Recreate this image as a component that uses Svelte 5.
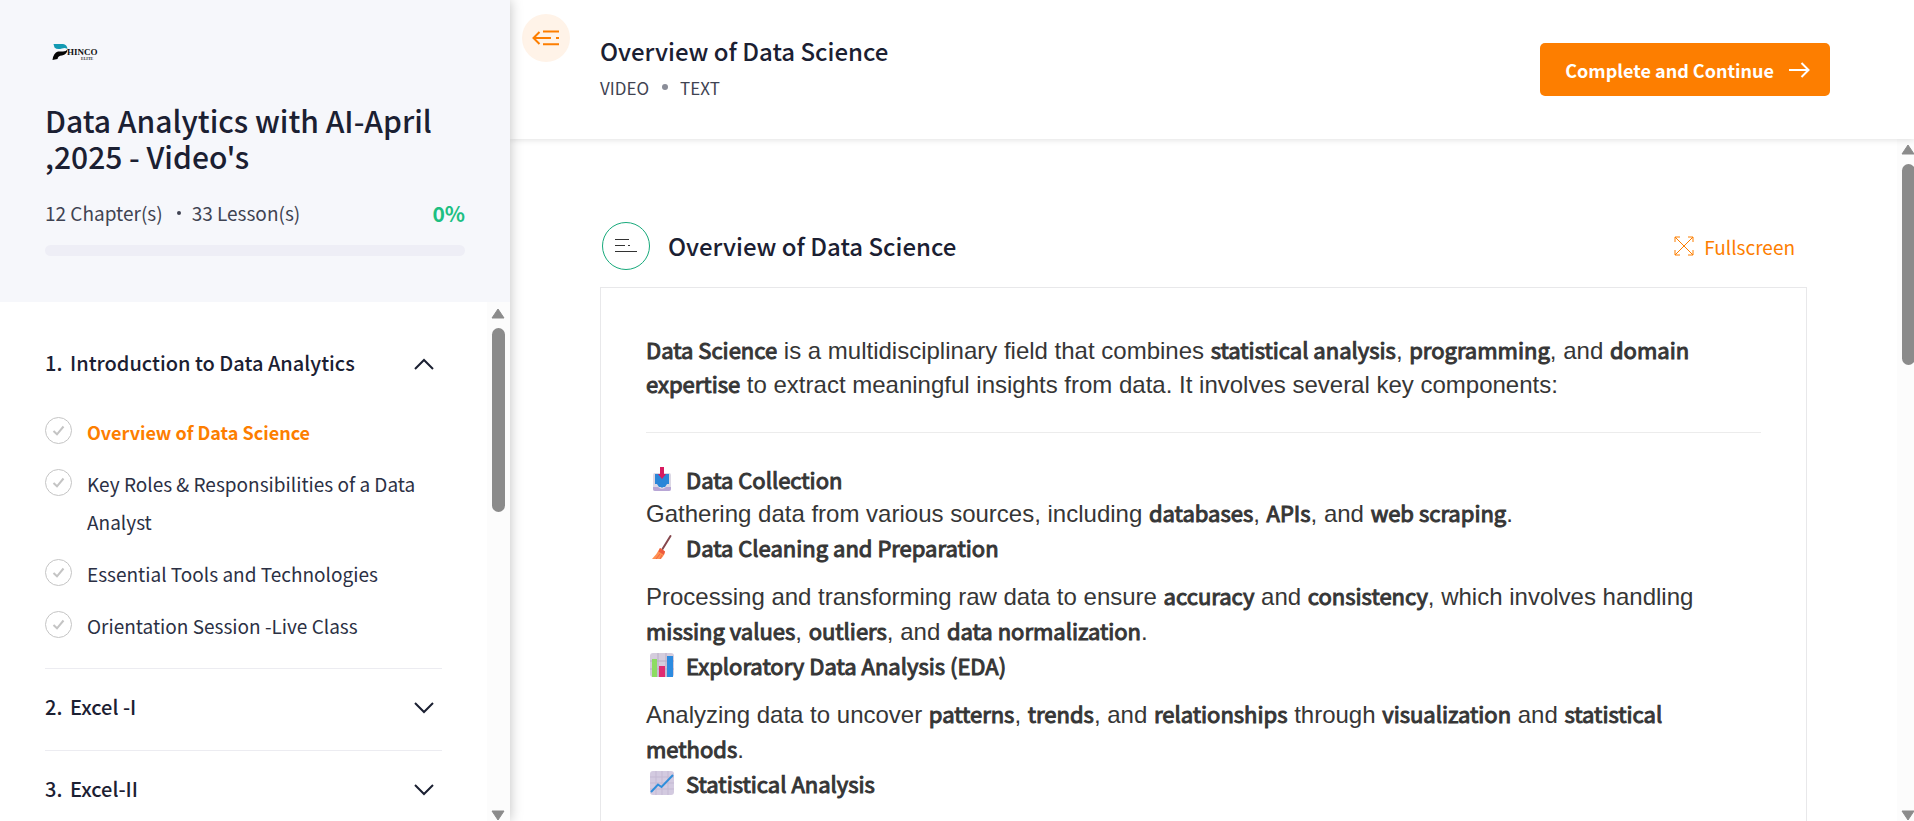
<script lang="ts">
	type Lesson = { title: string };
	type Chapter = { title: string; lessons: Lesson[] };

	const chapters: Chapter[] = [
		{
			title: 'Introduction to Data Analytics',
			lessons: [
				{ title: 'Overview of Data Science' },
				{ title: 'Key Roles & Responsibilities of a Data Analyst' },
				{ title: 'Essential Tools and Technologies' },
				{ title: 'Orientation Session -Live Class' }
			]
		},
		{ title: 'Excel -I', lessons: [] },
		{ title: 'Excel-II', lessons: [] }
	];

	let open = $state(0);
	let active = $state('Overview of Data Science');
	let progress = $state(0);

	function toggle(i: number) {
		open = open === i ? -1 : i;
	}
</script>

{#snippet scrollbar(kind: string)}
	<div class="scrollbar {kind}" aria-hidden="true">
		<svg class="arrow" width="14" height="11" viewBox="0 0 14 11"><path d="M7 1 L13 10 H1 Z" /></svg>
		<div class="thumb"></div>
		<svg class="arrow last" width="14" height="11" viewBox="0 0 14 11"><path d="M7 10 L13 1 H1 Z" /></svg>
	</div>
{/snippet}

<div class="player">
	<aside class="sidebar">
		<div class="course">
			<svg class="logo" width="60" height="24" viewBox="0 0 60 24" role="img" aria-label="Phinco Elite">
				<path d="M8.500 4 H18 Q22 4.500 22.500 9 Q20 7.500 17 8.500 Q12 10 9.500 7.500 Z" fill="#139ab3" />
				<path d="M22.500 9.500 Q22 14.500 17 15.500 Q13 15.800 12.500 19 L7.500 20 Q8.500 12.500 13 11.500 H18 Q21 11.500 22.500 9.500 Z" fill="#050505" />
				<text x="22" y="15" class="logo-name">HINCO</text>
				<text x="36" y="20" class="logo-sub">ELITE</text>
			</svg>
			<h1>Data Analytics with AI-April ,2025 - Video's</h1>
			<div class="stats">
				<span>12 Chapter(s)</span>
				<i class="dot"></i>
				<span>33 Lesson(s)</span>
				<strong>{progress}%</strong>
			</div>
			<div class="progress">
				<div class="progress-fill" style="width: {progress}%"></div>
			</div>
		</div>

		<div class="outline">
			<nav class="chapters">
				{#each chapters as chapter, i}
					<section class="chapter">
						<button class="chapter-head" aria-expanded={open === i} onclick={() => toggle(i)}>
							<span class="num">{i + 1}.</span>
							<span class="name">{chapter.title}</span>
							<svg class:up={open === i} width="20" height="12" viewBox="0 0 20 12">
								<path d="M1 1 L10 10 L19 1" />
							</svg>
						</button>
						{#if open === i && chapter.lessons.length}
							<ul>
								{#each chapter.lessons as lesson}
									<li>
										<button class="lesson" class:active={active === lesson.title} onclick={() => (active = lesson.title)}>
											<svg width="27" height="27" viewBox="0 0 27 27">
												<circle cx="13.500" cy="13.500" r="13" />
												<path d="M8.500 14 L12 17.300 L18.500 9.500" />
											</svg>
											<span>{lesson.title}</span>
										</button>
									</li>
								{/each}
							</ul>
						{/if}
					</section>
				{/each}
			</nav>
			{@render scrollbar('side')}
		</div>
	</aside>

	<main>
		<header>
			<button class="collapse" aria-label="Collapse sidebar">
				<svg width="28" height="16" viewBox="0 0 28 16">
					<path d="M7.500 2 L1.500 8 L7.500 14 M1.500 8 H19 M24 8 H27 M11 1.500 H27 M11 14.300 H27" />
				</svg>
			</button>
			<div class="heading">
				<h2>Overview of Data Science</h2>
				<p><span>VIDEO</span><i class="dot"></i><span>TEXT</span></p>
			</div>
			<button class="complete">
				Complete and Continue
				<svg width="22" height="16" viewBox="0 0 22 16">
					<path d="M1 8 H20.500 M13.500 1 L20.500 8 L13.500 15" />
				</svg>
			</button>
		</header>

		<div class="body">
			<div class="content">
				<div class="section-head">
					<span class="badge">
						<svg width="24" height="16" viewBox="0 0 24 16">
							<path d="M1 1.500 H15 M1 7.500 H11 M14 7.500 H16 M1 13.500 H23" />
						</svg>
					</span>
					<h2>Overview of Data Science</h2>
					<button class="fullscreen">
						<svg width="20" height="20" viewBox="0 0 20 20">
							<path d="M1 1 L19 19 M19 1 L1 19 M1 6 V1 H6 M14 1 H19 V6 M19 14 V19 H14 M6 19 H1 V14" />
						</svg>
						Fullscreen
					</button>
				</div>

				<article>
					<p>
						<b>Data Science</b> is a multidisciplinary field that combines <b>statistical analysis</b>, <b>programming</b>, and
						<b>domain expertise</b> to extract meaningful insights from data. It involves several key components:
					</p>
					<hr />
					<h3>
						<svg width="24" height="26" viewBox="0 0 24 26">
							<rect x="3" y="7" width="18" height="18" rx="2" fill="#dcd8e4" />
							<path d="M3 21 H8 Q10 23 12 23 Q14 23 16 21 H21 V23 Q21 25 19 25 H5 Q3 25 3 23 Z" fill="#b8a6d6" />
							<path d="M5 8 H19 V18 H17 L15 21 H13 L12 22 L11 21 H9 L7 18 H5 Z" fill="#2a86d8" />
							<path d="M10 1 H14 V8 H16 L12 13 L8 8 H10 Z" fill="#d81b60" />
						</svg>
						Data Collection
					</h3>
					<p>
						Gathering data from various sources, including <b>databases</b>, <b>APIs</b>, and <b>web scraping</b>.
					</p>
					<h3>
						<svg width="24" height="26" viewBox="0 0 24 26">
							<path d="M20.500 2 L12.500 15" stroke="#85474d" stroke-width="2" stroke-linecap="round" />
							<path d="M10 14 L15 17.500 Q14 22 11 25 H2 Q7 20 10 14 Z" fill="#ff9152" />
							<path d="M10 14 L15 17.500 L14 21 L8.500 17.500 Z" fill="#ee5a3d" />
							<path d="M6 25 L10 20 M10 25 L12 21" stroke="#f26645" />
						</svg>
						Data Cleaning and Preparation
					</h3>
					<p class="spaced">
						Processing and transforming raw data to ensure <b>accuracy</b> and <b>consistency</b>, which involves handling
						<b>missing values</b>, <b>outliers</b>, and <b>data normalization</b>.
					</p>
					<h3>
						<svg width="24" height="26" viewBox="0 0 24 26">
							<rect y="1" width="24" height="24" rx="3" fill="#d5cddd" />
							<path d="M8 1 V25 M16 1 V25 M0 9 H24 M0 17 H24" stroke="#b9adc6" />
							<rect x="2" y="7" width="5" height="18" fill="#8ddc62" />
							<rect x="9" y="14" width="6" height="11" fill="#e02b71" />
							<rect x="17" y="4" width="6" height="21" fill="#2c8be0" />
						</svg>
						Exploratory Data Analysis (EDA)
					</h3>
					<p class="spaced">
						Analyzing data to uncover <b>patterns</b>, <b>trends</b>, and <b>relationships</b> through <b>visualization</b> and
						<b>statistical methods</b>.
					</p>
					<h3>
						<svg width="24" height="26" viewBox="0 0 24 26">
							<rect y="1" width="24" height="24" rx="3" fill="#d3cae0" />
							<path d="M6 1 V25 M12 1 V25 M18 1 V25 M0 7 H24 M0 13 H24 M0 19 H24" stroke="#c4b9d3" />
							<path d="M1 22 L8 14.500 L11.500 17 L23 5" fill="none" stroke="#2f8edb" stroke-width="2" />
						</svg>
						Statistical Analysis
					</h3>
				</article>
			</div>
			{@render scrollbar('page')}
		</div>
	</main>
</div>

<style>
	:global(body) {
		font-family: 'Noto Sans CJK SC', 'Open Sans', sans-serif;
		color: #1b2032;
		overflow: hidden;
	}
	h1, h2, h3, p, ul {
		margin: 0;
		padding: 0;
		font-weight: 500;
	}
	button {
		border: 0;
		padding: 0;
		background: none;
		color: inherit;
		font-family: inherit;
		cursor: pointer;
	}
	svg {
		flex: none;
	}
	.player {
		display: flex;
		height: 100vh;
	}

	/* sidebar */
	.sidebar {
		width: 510px;
		flex: none;
		display: flex;
		flex-direction: column;
		background: #fff;
		box-shadow: 0 0 12px rgba(0, 0, 0, 0.25);
		z-index: 2;
	}
	.course {
		background: #f6f7fb;
		padding: 40px 45px 46px;
	}
	.logo {
		display: block;
		margin-bottom: 38px;
	}
	.logo-name {
		font: bold 9px 'Liberation Serif', serif;
		fill: #111;
	}
	.logo-sub {
		font: bold 4px 'Liberation Serif', serif;
		fill: #333;
	}
	h1 {
		font-size: 30px;
		line-height: 36px;
	}
	.stats {
		display: flex;
		align-items: center;
		margin: 23px 0 16px;
		font-size: 19px;
		line-height: 32px;
		color: #3f4352;
	}
	.stats .dot {
		width: 4px;
		height: 4px;
		margin: 0 11px 0 14px;
		border-radius: 50%;
		background: #3f4352;
	}
	.stats strong {
		margin-left: auto;
		font-size: 21px;
		font-weight: 700;
		color: #1dbf82;
	}
	.progress {
		height: 11px;
		border-radius: 6px;
		background: #eeeef6;
		overflow: hidden;
	}
	.progress-fill {
		height: 100%;
		background: #1dbf82;
	}
	.outline {
		flex: 1;
		min-height: 0;
		display: flex;
	}
	.chapters {
		flex: 1;
		padding: 23px 45px 0;
		overflow: hidden;
	}
	.chapter {
		border-bottom: 1px solid #ececf1;
	}
	.chapter-head {
		display: flex;
		align-items: center;
		width: 100%;
		height: 81px;
		padding: 0 8px 3px 0;
		font-size: 20px;
		font-weight: 500;
		text-align: left;
	}
	.num {
		width: 25px;
		padding-bottom: 4px;
	}
	.name {
		flex: 1;
		padding-bottom: 4px;
	}
	.chapter-head path {
		fill: none;
		stroke: #1b2032;
		stroke-width: 2;
	}
	.up {
		transform: rotate(180deg);
	}
	ul {
		list-style: none;
		padding-bottom: 16px;
	}
	.lesson {
		display: flex;
		align-items: flex-start;
		gap: 15px;
		width: 100%;
		padding: 7px 0;
		font-size: 19px;
		line-height: 38px;
		text-align: left;
		color: #2b3044;
	}
	.lesson svg {
		margin-top: 4px;
		fill: none;
		stroke: #c4c4c4;
	}
	.lesson path {
		stroke-width: 2;
	}
	.lesson.active {
		color: #fd7e00;
		font-size: 18px;
		font-weight: 700;
	}

	/* scrollbars */
	.scrollbar {
		flex: none;
		display: flex;
		flex-direction: column;
		padding-left: 4px;
		background: #fcfcfc;
	}
	.side {
		width: 19px;
		padding-top: 6px;
	}
	.page {
		width: 13px;
		padding-top: 5px;
		overflow: hidden;
	}
	.arrow path {
		fill: #8b8b8b;
		stroke: #8b8b8b;
		stroke-linejoin: round;
	}
	.arrow.last {
		margin-top: auto;
	}
	.thumb {
		width: 13px;
		margin: 9px 1px 0;
		border-radius: 7px;
		background: #8b8b8b;
	}
	.side .thumb {
		height: 184px;
	}
	.page .thumb {
		height: 201px;
	}

	/* main */
	main {
		flex: 1;
		min-width: 0;
		display: flex;
		flex-direction: column;
	}
	header {
		display: flex;
		align-items: flex-start;
		padding: 14px 84px 34px 12px;
		background: #fff;
		box-shadow: 0 1px 6px rgba(0, 0, 0, 0.12);
		z-index: 1;
	}
	.collapse {
		display: grid;
		place-items: center;
		width: 48px;
		height: 48px;
		border-radius: 50%;
		background: #fff3e8;
	}
	.collapse path {
		fill: none;
		stroke: #fd7e00;
		stroke-width: 2;
	}
	.heading {
		flex: 1;
		padding: 19px 0 0 30px;
	}
	h2 {
		font-size: 24px;
		line-height: 36px;
	}
	.heading p {
		display: flex;
		align-items: center;
		height: 36px;
		font-size: 17px;
		font-weight: 400;
		color: #3f4352;
	}
	.heading .dot {
		width: 6px;
		height: 6px;
		margin: 0 12px 0 13px;
		border-radius: 50%;
		background: #8a8d98;
	}
	.complete {
		display: flex;
		align-items: center;
		gap: 14px;
		height: 53px;
		margin-top: 29px;
		padding: 0 20px 0 25px;
		border-radius: 5px;
		background: #fd7e00;
		color: #fff;
		font-size: 18px;
		font-weight: 700;
	}
	.complete path {
		fill: none;
		stroke: #fff;
		stroke-width: 2;
	}
	.body {
		flex: 1;
		min-height: 0;
		display: flex;
	}
	.content {
		flex: 1;
		padding: 83px 90px 0;
		overflow: hidden;
	}
	.section-head {
		display: flex;
		align-items: center;
		padding: 0 12px 17px 2px;
	}
	.badge {
		display: grid;
		place-items: center;
		box-sizing: border-box;
		width: 48px;
		height: 48px;
		margin-right: 18px;
		border: 1px solid #17a97b;
		border-radius: 50%;
	}
	.badge path {
		stroke: #333;
		stroke-width: 1;
	}
	.fullscreen {
		display: flex;
		align-items: center;
		gap: 10px;
		margin-left: auto;
		font-size: 19px;
		color: #fd7e00;
	}
	.fullscreen path {
		fill: none;
		stroke: #fd7e00;
	}
	article {
		padding: 46px 45px;
		border: 1px solid #e8e8ea;
		font: 24px/34px 'Liberation Sans', Arial, sans-serif;
		color: #363636;
	}
	article p {
		font-weight: 400;
	}
	article .spaced {
		margin: 16px 0 0;
		line-height: 35px;
	}
	b, h3 {
		font-family: 'Noto Sans CJK SC', 'Open Sans', sans-serif;
		font-size: 22px;
		font-weight: 400;
		line-height: 1;
		-webkit-text-stroke: 1px #363636;
	}
	hr {
		margin: 30px 0;
		border: 0;
		border-top: 1px solid #ececec;
	}
	h3 {
		display: flex;
		align-items: center;
		gap: 12px;
		height: 32px;
		margin-bottom: 2px;
		padding-left: 4px;
	}
</style>
